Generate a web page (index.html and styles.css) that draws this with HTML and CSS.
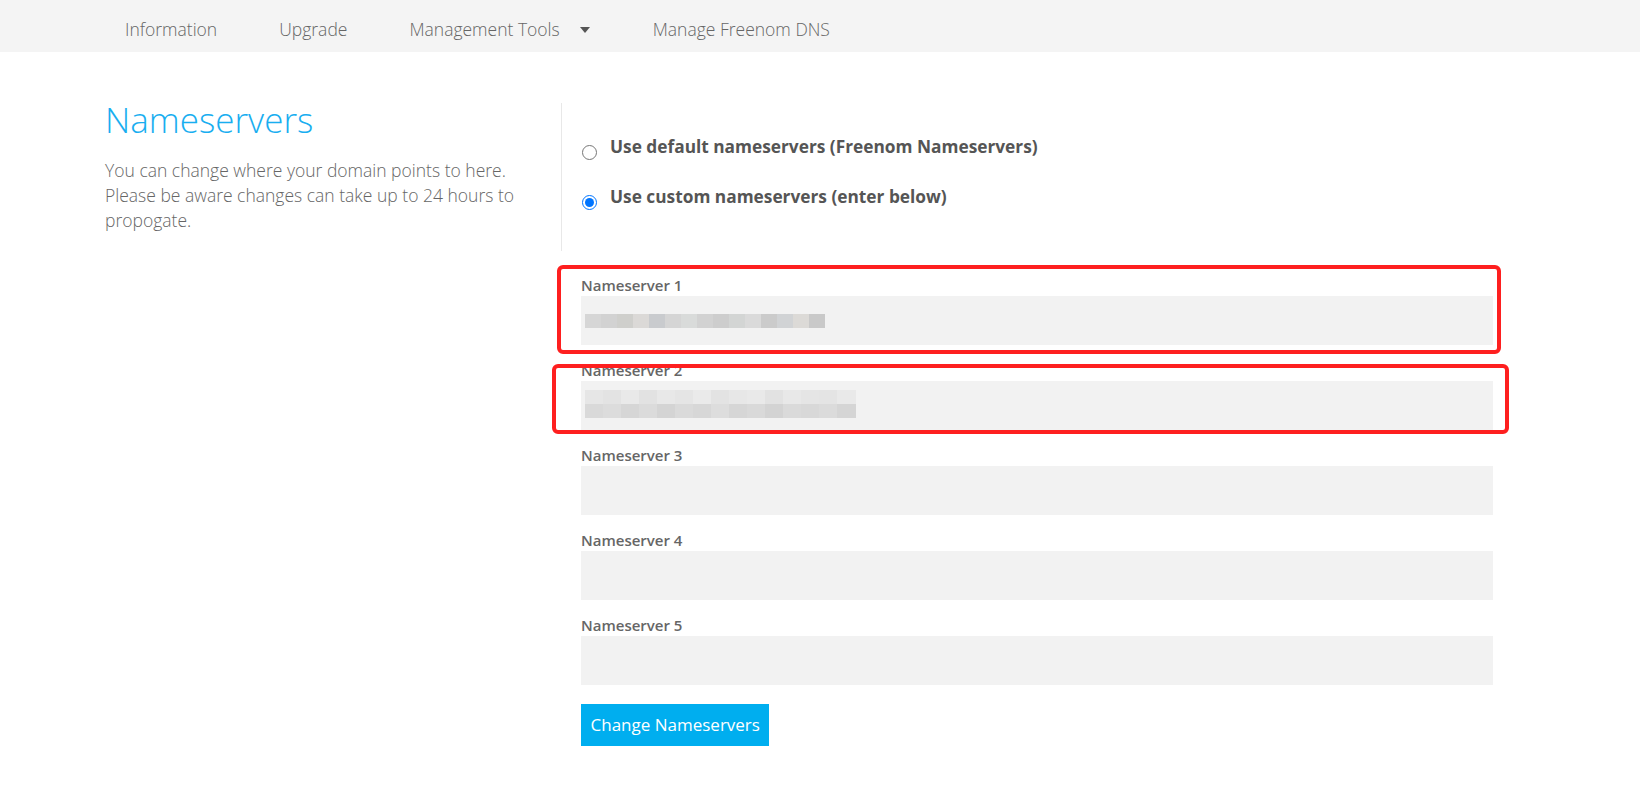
FILE: index.html
```html
<!DOCTYPE html>
<html lang="en">
<head>
<meta charset="utf-8">
<title>Nameservers</title>
<link rel="stylesheet" href="styles.css">
</head>
<body>
<div class="page">
  <nav class="topnav">
    <a class="nav-item">Information</a>
    <a class="nav-item">Upgrade</a>
    <a class="nav-item">Management Tools <span class="caret"></span></a>
    <a class="nav-item">Manage Freenom DNS</a>
  </nav>

  <main class="content">
    <section class="intro">
      <h1 class="title">Nameservers</h1>
      <p class="desc">You can change where your domain points to here. Please be aware changes can take up to 24 hours to propogate.</p>
    </section>

    <section class="settings">
      <div class="choices">
        <label class="choice"><input type="radio" name="ns" class="radio"><span>Use default nameservers (Freenom Nameservers)</span></label>
        <label class="choice"><input type="radio" name="ns" class="radio" checked><span>Use custom nameservers (enter below)</span></label>
      </div>

      <div class="fields">
        <div class="field">
          <div class="field-label">Nameserver 1</div>
          <div class="field-input"><span class="mosaic mosaic-1"></span></div>
        </div>
        <div class="field">
          <div class="field-label">Nameserver 2</div>
          <div class="field-input"><span class="mosaic mosaic-2"></span></div>
        </div>
        <div class="field">
          <div class="field-label">Nameserver 3</div>
          <div class="field-input"></div>
        </div>
        <div class="field">
          <div class="field-label">Nameserver 4</div>
          <div class="field-input"></div>
        </div>
        <div class="field">
          <div class="field-label">Nameserver 5</div>
          <div class="field-input"></div>
        </div>
        <button class="submit" type="button">Change Nameservers</button>
      </div>
    </section>
  </main>

  <div class="mark mark-1"></div>
  <div class="mark mark-2"></div>
</div>
</body>
</html>
```

FILE: styles.css
```css
* { box-sizing: border-box; }

html, body {
  margin: 0;
  padding: 0;
  background: #ffffff;
}

body {
  font-family: "Open Sans", "Noto Sans", "Liberation Sans", sans-serif;
  color: #666666;
}

.page {
  position: relative;
  width: 1640px;
  min-height: 797px;
}

.topnav {
  height: 52px;
  background: #f4f4f4;
  display: flex;
  align-items: center;
  padding: 6px 0 0 125px;
  gap: 62px;
}

.nav-item {
  font-size: 17.5px;
  font-weight: 300;
  line-height: 25px;
  color: #666666;
  display: flex;
  align-items: center;
}

.caret {
  display: inline-block;
  width: 0;
  height: 0;
  margin: 2px 1px 0 20px;
  border-left: 5px solid transparent;
  border-right: 5px solid transparent;
  border-top: 6px solid #555555;
}

.content {
  display: grid;
  grid-template-columns: 456px 932px;
  padding: 47px 0 0 105px;
}

.title {
  margin: 0;
  font-size: 35px;
  font-weight: 300;
  line-height: 42px;
  color: #19aef0;
}

.desc {
  margin: 17px 0 0;
  width: 430px;
  font-size: 17.5px;
  font-weight: 300;
  line-height: 25px;
  color: #666666;
}

.settings {
  padding-top: 4px;
}

.choices {
  border-left: 1px solid #e8e8e8;
  padding: 31px 0 42px 20px;
  display: flex;
  flex-direction: column;
  gap: 25px;
}

.choice {
  display: flex;
  align-items: flex-start;
  height: 25px;
  font-size: 17.3px;
  font-weight: 700;
  line-height: 26px;
  color: #555555;
}

.radio {
  width: 15px;
  height: 15px;
  margin: 11px 13px 0 0;
  flex: none;
}

.fields {
  padding: 24px 0 0 20px;
  display: flex;
  flex-direction: column;
  align-items: flex-start;
}

.field {
  width: 912px;
  margin-bottom: 15px;
}

.field-label {
  font-size: 15px;
  font-weight: 600;
  line-height: 20px;
  color: #666666;
  margin-bottom: 1px;
}

.field-input {
  height: 49px;
  background: #f2f2f2;
  position: relative;
}

.mosaic {
  position: absolute;
  left: 4px;
}

.mosaic-1 {
  top: 18px;
  width: 240px;
  height: 14px;
  background: linear-gradient(90deg,
    #d6d6d6 0 16px, #d2d2d2 16px 32px, #cfcfcc 32px 48px, #dbd9d7 48px 64px,
    #c9cbce 64px 80px, #d5d5d5 80px 96px, #d9dbda 96px 112px, #d2d2d2 112px 128px,
    #cdcdcd 128px 144px, #d3d5d4 144px 160px, #dadada 160px 176px, #cbcbcb 176px 192px,
    #d1d3d5 192px 208px, #dcdad7 208px 224px, #c9c9c9 224px 240px);
}

.mosaic-2 {
  top: 9px;
  width: 271px;
  height: 28px;
  background:
    linear-gradient(90deg,
      #e6e6e6 0 18px, #e3e3e3 18px 36px, #e9e9e9 36px 54px, #e2e2e2 54px 72px,
      #e8e8e8 72px 90px, #e5e5e5 90px 108px, #eaeaea 108px 126px, #e3e3e3 126px 144px,
      #e7e7e7 144px 162px, #e9e9e9 162px 180px, #e2e2e2 180px 198px, #e8e8e8 198px 216px,
      #e5e5e5 216px 234px, #e4e4e4 234px 252px, #e9e9e9 252px 271px) top / 100% 14px no-repeat,
    linear-gradient(90deg,
      #d9d9d9 0 18px, #dcdcdc 18px 36px, #d6d6d6 36px 54px, #dbdbdb 54px 72px,
      #d4d4d4 72px 90px, #dadada 90px 108px, #d7d7d7 108px 126px, #dddddd 126px 144px,
      #d6d6d6 144px 162px, #d9d9d9 162px 180px, #d3d3d3 180px 198px, #dadada 198px 216px,
      #d8d8d8 216px 234px, #dbdbdb 234px 252px, #d5d5d5 252px 271px) bottom / 100% 14px no-repeat;
}

.submit {
  margin-top: 4px;
  height: 42px;
  padding: 0 9.5px;
  border: 0;
  border-radius: 0;
  background: #00aeef;
  color: #ffffff;
  font-family: "Open Sans", "Noto Sans", "Liberation Sans", sans-serif;
  font-size: 17px;
  font-weight: 400;
  line-height: 42px;
}

.mark {
  position: absolute;
  border: 4px solid #fe1f1f;
  border-radius: 6px;
  pointer-events: none;
}

.mark-1 {
  left: 557px;
  top: 265px;
  width: 944px;
  height: 89px;
}

.mark-2 {
  left: 552px;
  top: 364px;
  width: 957px;
  height: 70px;
}
```
